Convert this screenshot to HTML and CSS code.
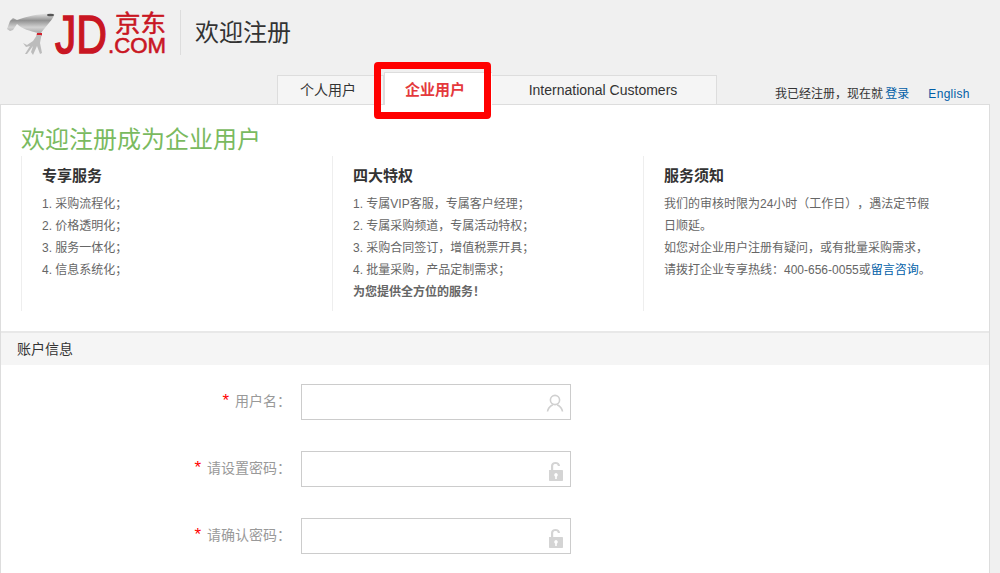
FILE: index.html
```html
<!DOCTYPE html>
<html lang="zh-CN">
<head>
<meta charset="utf-8">
<title>欢迎注册</title>
<link rel="stylesheet" href="styles.css">
</head>
<body>
<header class="header">
  <a class="logo" href="#" aria-label="JD.COM 京东">
    <svg class="logo-svg" width="160" height="46" viewBox="0 0 160 46">
      <defs>
        <linearGradient id="dogbody" x1="0" y1="0" x2="0" y2="1">
          <stop offset="0" stop-color="#e2e2e2"/>
          <stop offset=".35" stop-color="#929292"/>
          <stop offset=".7" stop-color="#d2d2d2"/>
          <stop offset="1" stop-color="#aaaaaa"/>
        </linearGradient>
      </defs>
      <g transform="translate(-8,-10)">
        <path d="M7 29 L10 21 L13 18 L17 20 C28 16 42 13 54.500 14 C54 18 47 25 41 33 L38 33 C30 31 22 29 17 24 L15 27 L13 30 L10 31 Z" fill="url(#dogbody)"/>
        <ellipse cx="50.500" cy="15" rx="3.500" ry="1.300" fill="#555"/>
        <path d="M37 33 L42 33 L42 35.500 L36.500 35.500 Z" fill="#d2212c"/>
        <path d="M37 35 L41.500 35 L40 43 L42 53 L40 54 L37 46 L33 55 L31 52 L33 46 L27 54 L25 54 L30 46 L26 47 L23 43 L27 45 L33 41 Z" fill="#bcbcbc"/>
      </g>
      <text class="logo-jd" x="47" y="43" textLength="52" lengthAdjust="spacingAndGlyphs">JD</text>
      <text class="logo-cn" x="107" y="22" textLength="51" lengthAdjust="spacingAndGlyphs">京东</text>
      <text class="logo-com" x="100" y="43" textLength="58" lengthAdjust="spacingAndGlyphs">.COM</text>
    </svg>
  </a>
  <h1 class="header-title">欢迎注册</h1>
</header>

<nav class="nav">
  <div class="tabs">
    <a class="tab tab-personal" href="#">个人用户</a>
    <a class="tab tab-active" href="#">企业用户</a>
    <a class="tab tab-intl" href="#">International Customers</a>
    <span class="highlight"></span>
  </div>
  <div class="nav-side">
    <span class="login-note">我已经注册，现在就 <a class="link" href="#">登录</a></span>
    <a class="link lang" href="#">English</a>
  </div>
</nav>

<main class="card">
  <h2 class="welcome">欢迎注册成为企业用户</h2>
  <div class="columns">
    <section class="col">
      <h3 class="col-title">专享服务</h3>
      <p>1. 采购流程化；</p>
      <p>2. 价格透明化；</p>
      <p>3. 服务一体化；</p>
      <p>4. 信息系统化；</p>
    </section>
    <section class="col">
      <h3 class="col-title">四大特权</h3>
      <p>1. 专属VIP客服，专属客户经理；</p>
      <p>2. 专属采购频道，专属活动特权；</p>
      <p>3. 采购合同签订，增值税票开具；</p>
      <p>4. 批量采购，产品定制需求；</p>
      <p class="strong">为您提供全方位的服务！</p>
    </section>
    <section class="col">
      <h3 class="col-title">服务须知</h3>
      <p>我们的审核时限为24小时（工作日），遇法定节假日顺延。</p>
      <p>如您对企业用户注册有疑问，或有批量采购需求，</p>
      <p>请拨打企业专享热线：400-656-0055或<a class="link" href="#">留言咨询</a>。</p>
    </section>
  </div>

  <div class="section-bar">账户信息</div>

  <form class="form">
    <div class="row">
      <label class="label"><span class="req">*</span>用户名：</label>
      <div class="field">
        <svg class="icon" width="18" height="20" viewBox="0 -1.500 18 20" fill="none" stroke="#d0d0d0" stroke-width="1.600">
          <circle cx="9" cy="6.500" r="4.600"/>
          <path d="M1.500 18 C2 14 4.500 12.500 6.800 11.200 M16.500 18 C16 14 13.500 12.500 11.200 11.200"/>
        </svg>
      </div>
    </div>
    <div class="row">
      <label class="label"><span class="req">*</span>请设置密码：</label>
      <div class="field">
        <svg class="icon" width="18" height="20" viewBox="-1 -2 18 20">
          <path d="M4 9 V5 C4 2.500 6 1 8.500 1 C11 1 13 2.500 13 5 H10.800 C10.800 3.600 9.800 3 8.500 3 C7.200 3 6.200 3.600 6.200 5 V9 Z" fill="#d4d4d4"/>
          <path fill-rule="evenodd" d="M2 9 H15 C15.600 9 16 9.400 16 10 V19 C16 19.600 15.600 20 15 20 H3 C2.400 20 2 19.600 2 19 Z M9 12 A2 2 0 0 0 8.200 15.700 V18 H9.800 V15.700 A2 2 0 0 0 9 12 Z" fill="#d4d4d4"/>
        </svg>
      </div>
    </div>
    <div class="row">
      <label class="label"><span class="req">*</span>请确认密码：</label>
      <div class="field">
        <svg class="icon" width="18" height="20" viewBox="-1 -2 18 20">
          <path d="M4 9 V5 C4 2.500 6 1 8.500 1 C11 1 13 2.500 13 5 H10.800 C10.800 3.600 9.800 3 8.500 3 C7.200 3 6.200 3.600 6.200 5 V9 Z" fill="#d4d4d4"/>
          <path fill-rule="evenodd" d="M2 9 H15 C15.600 9 16 9.400 16 10 V19 C16 19.600 15.600 20 15 20 H3 C2.400 20 2 19.600 2 19 Z M9 12 A2 2 0 0 0 8.200 15.700 V18 H9.800 V15.700 A2 2 0 0 0 9 12 Z" fill="#d4d4d4"/>
        </svg>
      </div>
    </div>
  </form>
</main>
</body>
</html>
```

FILE: styles.css
```css
* { box-sizing: border-box; }
html, body { height: 100%; overflow: hidden; }
body {
  margin: 0;
  background: #f0f0f0;
  color: #333;
  font: 12px/22px "Liberation Sans", "Noto Sans CJK SC", sans-serif;
  text-spacing-trim: space-all;
}
a { text-decoration: none; color: inherit; }
h1, h2, h3, p { margin: 0; font-weight: normal; }

.header {
  display: flex;
  align-items: center;
  height: 75px;
  padding: 0 0 10px 8px;
}
.logo { display: block; height: 46px; }
.logo-svg { display: block; overflow: visible; }
.logo-jd { font: 400 54px "Liberation Sans", sans-serif; fill: #c91623; stroke: #c91623; stroke-width: 1.5px; }
.logo-cn { font: 400 24px "Noto Sans CJK SC", sans-serif; fill: #c91623; stroke: #c91623; stroke-width: .5px; }
.logo-com { font: 400 22px "Liberation Sans", sans-serif; fill: #c91623; stroke: #c91623; stroke-width: .6px; }
.header-title {
  margin-left: 12px;
  padding-left: 14px;
  border-left: 1px solid #ddd;
  height: 45px;
  font-size: 24px;
  line-height: 45px;
  color: #333;
}

.nav {
  display: flex;
  align-items: flex-end;
  height: 29px;
  width: 990px;
  padding-left: 277px;
}
.tabs {
  position: relative;
  display: flex;
  align-items: flex-end;
  width: 440px;
  height: 29px;
  z-index: 1;
}
.tab {
  display: block;
  height: 29px;
  border: 1px solid #ddd;
  border-bottom: 0;
  background: #f5f5f5;
  text-align: center;
  font-size: 14px;
  line-height: 28px;
  color: #333;
}
.tab-personal { width: 107px; padding-right: 5px; }
.tab-active {
  width: 108px;
  height: 33px;
  margin-bottom: -1px;
  padding-right: 7px;
  background: #fff;
  border-right: 0;
  color: #e4393c;
  font-size: 15px;
  font-weight: 700;
  line-height: 34px;
}
.tab-intl { flex: 1; padding-right: 2px; border-left: 0; }
.highlight {
  position: absolute;
  left: 97px;
  top: -13px;
  width: 117px;
  height: 57px;
  border: 7px solid #f00;
  border-radius: 4px;
}
.nav-side {
  display: flex;
  gap: 18px;
  margin-left: 58px;
  margin-bottom: -1px;
  height: 22px;
}
.login-note { word-spacing: -1px; padding-right: 1px; }
.link { color: #005ea7; }
.lang { letter-spacing: .3px; }

.card {
  width: 990px;
  background: #fff;
  border-top: 1px solid #ddd;
  border-left: 1px solid #ddd;
  border-right: 1px solid #ddd;
  padding-bottom: 19px;
}
.welcome {
  margin-left: 20px;
  padding-top: 18px;
  font-size: 24px;
  line-height: 33px;
  color: #7aba5f;
}
.columns {
  display: flex;
  margin-left: 20px;
  height: 155px;
}
.col {
  width: 311px;
  padding: 9px 20px 0 20px;
  border-left: 1px solid #eee;
  color: #666;
}
.col-title {
  margin-bottom: 6px;
  font-size: 15px;
  font-weight: 700;
  line-height: 22px;
  color: #333;
}
.strong { font-weight: 700; }
.section-bar {
  margin-top: 20px;
  height: 34px;
  padding-left: 16px;
  border-top: 2px solid #e8e8e8;
  background: #f5f5f5;
  font-size: 14px;
  line-height: 33px;
  color: #333;
}
.form { padding-top: 19px; }
.row {
  display: flex;
  align-items: center;
}
.row + .row { margin-top: 31px; }
.label {
  width: 290px;
  padding-bottom: 2px;
  text-align: right;
  font-size: 14px;
  color: #999;
}
.req { margin-right: 6px; font-size: 17px; color: #f00; }
.field {
  display: flex;
  align-items: center;
  justify-content: flex-end;
  width: 270px;
  height: 36px;
  margin-left: 10px;
  padding-right: 6px;
  border: 1px solid #ccc;
  background: #fff;
}
.icon { display: block; overflow: visible; }
```
